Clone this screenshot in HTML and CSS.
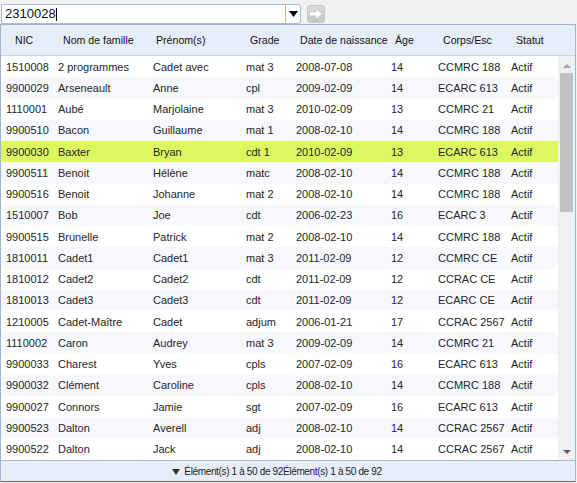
FILE: index.html
```html
<!DOCTYPE html>
<html lang="fr">
<head>
<meta charset="utf-8">
<title>Liste</title>
<link rel="stylesheet" href="styles.css">
</head>
<body>
<div class="toolbar">
  <div class="combo">
    <span class="combo-text">2310028</span><span class="caret"></span>
    <span class="combo-btn"><svg width="9" height="6" viewBox="0 0 9 6"><path d="M0 0h9L4.5 6z" fill="#000"/></svg></span>
  </div>
  <div class="go-btn"><svg width="14" height="12" viewBox="0 0 14 12"><path d="M1 4.5h6.5V1.5L12.5 6l-5 4.5V7.5H1z" fill="#fff"/></svg></div>
</div>
<div class="grid">
  <div class="head">
    <span>NIC</span><span>Nom de famille</span><span>Prénom(s)</span><span>Grade</span><span>Date de naissance</span><span>Âge</span><span>Corps/Esc</span><span>Statut</span>
  </div>
  <div class="body">
    <div class="rows">
      <div class="row"><span>1510008</span><span>2 programmes</span><span class="p3">Cadet avec</span><span class="g2">mat 3</span><span class="d2">2008-07-08</span><span>14</span><span>CCMRC 188</span><span>Actif</span></div>
      <div class="row"><span>9900029</span><span>Arseneault</span><span class="p2">Anne</span><span>cpl</span><span class="d1">2009-02-09</span><span>14</span><span>ECARC 613</span><span>Actif</span></div>
      <div class="row"><span>1110001</span><span>Aubé</span><span>Marjolaine</span><span class="g2">mat 3</span><span class="d1">2010-02-09</span><span>13</span><span>CCMRC 21</span><span>Actif</span></div>
      <div class="row"><span>9900510</span><span>Bacon</span><span>Guillaume</span><span class="g2">mat 1</span><span class="d1">2008-02-10</span><span>14</span><span>CCMRC 188</span><span>Actif</span></div>
      <div class="row sel"><span>9900030</span><span>Baxter</span><span>Bryan</span><span class="g0">cdt 1</span><span>2010-02-09</span><span>13</span><span>ECARC 613</span><span>Actif</span></div>
      <div class="row"><span>9900511</span><span>Benoit</span><span>Hélène</span><span class="g2">matc</span><span class="d1">2008-02-10</span><span>14</span><span>CCMRC 188</span><span>Actif</span></div>
      <div class="row"><span>9900516</span><span>Benoit</span><span>Johanne</span><span class="g2">mat 2</span><span class="d1">2008-02-10</span><span>14</span><span>CCMRC 188</span><span>Actif</span></div>
      <div class="row"><span>1510007</span><span>Bob</span><span>Joe</span><span class="g0">cdt</span><span class="d0">2006-02-23</span><span>16</span><span>ECARC 3</span><span>Actif</span></div>
      <div class="row"><span>9900515</span><span>Brunelle</span><span>Patrick</span><span class="g2">mat 2</span><span class="d1">2008-02-10</span><span>14</span><span>CCMRC 188</span><span>Actif</span></div>
      <div class="row"><span>1810011</span><span>Cadet1</span><span>Cadet1</span><span class="g2">mat 3</span><span class="d1">2011-02-09</span><span>12</span><span>CCMRC CE</span><span>Actif</span></div>
      <div class="row"><span>1810012</span><span>Cadet2</span><span>Cadet2</span><span class="g2">cdt</span><span class="d1">2011-02-09</span><span>12</span><span>CCRAC CE</span><span>Actif</span></div>
      <div class="row"><span>1810013</span><span>Cadet3</span><span>Cadet3</span><span class="g2">cdt</span><span class="d1">2011-02-09</span><span>12</span><span>ECARC CE</span><span>Actif</span></div>
      <div class="row"><span>1210005</span><span>Cadet-Maître</span><span>Cadet</span><span class="g0">adjum</span><span class="d1">2006-01-21</span><span>17</span><span>CCRAC 2567</span><span>Actif</span></div>
      <div class="row"><span>1110002</span><span>Caron</span><span>Audrey</span><span class="g2">mat 3</span><span class="d1">2009-02-09</span><span>14</span><span>CCMRC 21</span><span>Actif</span></div>
      <div class="row"><span>9900033</span><span>Charest</span><span>Yves</span><span class="g2">cpls</span><span class="d1">2007-02-09</span><span>16</span><span>ECARC 613</span><span>Actif</span></div>
      <div class="row"><span>9900032</span><span>Clément</span><span>Caroline</span><span class="g2">cpls</span><span class="d1">2008-02-10</span><span>14</span><span>CCMRC 188</span><span>Actif</span></div>
      <div class="row"><span>9900027</span><span>Connors</span><span>Jamie</span><span>sgt</span><span class="d1">2007-02-09</span><span>16</span><span>ECARC 613</span><span>Actif</span></div>
      <div class="row"><span>9900523</span><span>Dalton</span><span>Averell</span><span class="g2">adj</span><span class="d1">2008-02-10</span><span>14</span><span>CCRAC 2567</span><span>Actif</span></div>
      <div class="row"><span>9900522</span><span>Dalton</span><span>Jack</span><span>adj</span><span class="d1">2008-02-10</span><span>14</span><span>CCRAC 2567</span><span>Actif</span></div>
    </div>
    <div class="scrollbar">
      <div class="sb-up"></div>
      <div class="sb-track"><div class="sb-thumb"></div></div>
      <div class="sb-down"></div>
    </div>
  </div>
  <div class="foot"><span class="foot-arrow"></span>Élément(s) 1 à 50 de 92Élément(s) 1 à 50 de 92</div>
</div>
</body>
</html>
```
FILE: styles.css
```css
* { box-sizing: border-box; }
html, body { margin: 0; padding: 0; }
body {
  width: 577px;
  height: 483px;
  overflow: hidden;
  background: #f1f1f1;
  font-family: "Liberation Sans", Arial, sans-serif;
  color: #222;
}
.toolbar {
  display: flex;
  align-items: flex-start;
  height: 24px;
  padding: 4px 0 0 1px;
}
.combo {
  position: relative;
  display: flex;
  align-items: center;
  width: 300px;
  height: 20px;
  background: #fff;
  border: 1px solid #a9bdd6;
  border-radius: 0 3px 3px 0;
}
.combo-text {
  font-size: 13px;
  color: #111;
  padding-left: 3px;
  line-height: 16px;
}
.caret {
  width: 1px;
  height: 13px;
  background: #000;
}
.combo-btn {
  margin-left: auto;
  width: 15px;
  height: 18px;
  border-left: 1px solid #c8b58e;
  display: flex;
  align-items: center;
  justify-content: center;
}
.go-btn {
  margin: 1px 0 0 6px;
  width: 18px;
  height: 18px;
  border-radius: 3px;
  background: linear-gradient(#dadada, #c4c4c4);
  border: 1px solid #c8c8c8;
  display: flex;
  align-items: center;
  justify-content: center;
}
.grid {
  width: 576px;
  height: 458px;
  border: 1px solid #a3b5cd;
  border-bottom-color: #6c6c6c;
  background: #fff;
  display: flex;
  flex-direction: column;
}
.head {
  display: grid;
  grid-template-columns: 48px 93px 94px 50px 95px 48px 73px 1fr;
  padding-left: 14px;
  height: 31px;
  align-items: center;
  background: #e6eefa;
  border-bottom: 1px solid #c9d5e6;
  font-size: 10.6px;
  color: #111;
  flex: none;
}
.body {
  display: flex;
  height: 404px;
  flex: none;
}
.rows {
  flex: 1;
  overflow: hidden;
}
.row {
  display: grid;
  grid-template-columns: 52px 94px 92px 50px 97px 47px 73px 1fr;
  height: 21.25px;
  align-items: center;
  font-size: 11px;
  padding-left: 5px;
  white-space: nowrap;
  color: #262626;
}
.row:nth-child(even) { background: #f6f8fc; }
.row.sel { background: #dcf760; }
.row span:nth-child(3) { padding-left: 1px; }
.row span:nth-child(4) { padding-left: 2px; }
.row span:nth-child(5) { padding-left: 2px; }
.row span:nth-child(6) { padding-left: 0; }
.row .p2 { padding-left: 3px; }
.row .p3 { padding-left: 4px; }
.row .g0 { padding-left: 0; }
.row .g2 { padding-left: 5px; }
.row .d0 { padding-left: 0; }
.row .d1 { padding-left: 3px; }
.row .d2 { padding-left: 4px; }
.scrollbar {
  width: 17px;
  background: #f0f0f0;
  display: flex;
  flex-direction: column;
  align-items: center;
  flex: none;
}
.sb-up, .sb-down {
  height: 17px;
  width: 17px;
  flex: none;
  position: relative;
}
.sb-up::after, .sb-down::after {
  content: "";
  position: absolute;
  left: 5px;
  top: 7px;
  border-left: 4px solid transparent;
  border-right: 4px solid transparent;
}
.sb-up::after { border-bottom: 4px solid #a3a3a3; top: 8px; }
.sb-down::after { border-top: 4px solid #5f5f5f; }
.sb-track {
  flex: 1;
  width: 17px;
  padding: 0 2px;
}
.sb-thumb {
  height: 139px;
  background: #c1c1c1;
}
.foot {
  flex: 1;
  background: #e7eefa;
  border-top: 1px solid #a9bbd2;
  display: flex;
  align-items: center;
  justify-content: center;
  font-size: 10px;
  letter-spacing: -0.35px;
  color: #222;
  padding-right: 22px;
}
.foot-arrow {
  width: 0;
  height: 0;
  border-left: 4px solid transparent;
  border-right: 4px solid transparent;
  border-top: 6px solid #333;
  margin-right: 4px;
  margin-top: 1px;
}
```
